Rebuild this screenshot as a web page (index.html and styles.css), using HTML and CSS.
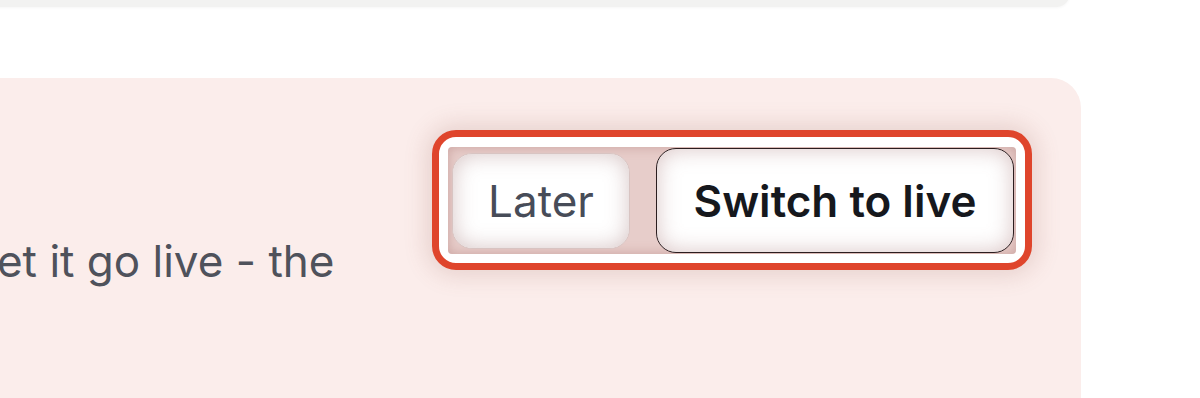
FILE: index.html
```html
<!DOCTYPE html>
<html lang="en">
<head>
    <meta charset="UTF-8">
    <meta name="viewport" content="width=device-width, initial-scale=1.0">
    <title>Publish settings</title>
    <link rel="stylesheet" href="styles.css">
</head>
<body>
    <div class="page">
        <div class="card card-top"></div>

        <section class="card banner">
            <div class="banner-text">
                <p>When you're happy, let it go live - the</p>
            </div>

            <div class="highlight">
                <div class="toggle">
                    <button class="btn btn-later">Later</button>
                    <button class="btn btn-live">Switch to live</button>
                </div>
            </div>
        </section>
    </div>
</body>
</html>
```

FILE: styles.css
```css
/* Estilos - banner de publicación */
:root {
    --banner-bg: #fbedeb;
    --top-bg: #f2f2f1;
    --frame-red: #df452c;
    --toggle-bg: #e7cdca;
    --text-muted: #4f525b;
    --text-dark: #16181d;
}

* {
    margin: 0;
    padding: 0;
    box-sizing: border-box;
    font-family: Inter, 'Noto Sans', sans-serif;
}

body {
    background-color: #ffffff;
    overflow: hidden;
}

.page {
    margin: 0 119px 0 -520px;
}

.card-top {
    height: 40px;
    margin-top: -33px;
    margin-right: 11px;
    margin-bottom: 71px;
    background-color: var(--top-bg);
    border-radius: 0 0 14px 0;
    box-shadow: 0 1px 3px rgba(0, 0, 0, 0.04);
}

.banner {
    display: flex;
    justify-content: space-between;
    align-items: flex-start;
    min-height: 400px;
    padding: 52px 49px 0 78px;
    background-color: var(--banner-bg);
    border-radius: 0 30px 0 0;
}

.banner-text p {
    margin-top: 101px;
    font-size: 44px;
    line-height: 60px;
    color: var(--text-muted);
}

.highlight {
    width: 600px;
    padding: 10px 9px 9px 9px;
    background-color: #ffffff;
    border: 7px solid var(--frame-red);
    border-radius: 24px;
    box-shadow: 0 0 22px 6px rgba(150, 90, 80, 0.18);
}

.toggle {
    display: flex;
    align-items: center;
    gap: 26px;
    height: 107px;
    padding: 0 2px 0 4px;
    background-color: var(--toggle-bg);
    border-radius: 4px;
    box-shadow: inset 0 0 12px rgba(160, 100, 95, 0.4);
}

.btn {
    font-size: 44px;
    border-radius: 20px;
    background-color: #ffffff;
    cursor: pointer;
}

.btn-later {
    width: 178px;
    height: 96px;
    color: #474c58;
    font-weight: 400;
    border: 1px solid #d8c4c2;
    box-shadow: inset 0 0 22px rgba(165, 125, 125, 0.45);
}

.btn-live {
    width: 358px;
    height: 105px;
    color: var(--text-dark);
    font-weight: 600;
    border: 1.5px solid #2b1d1f;
    box-shadow: inset 0 0 22px rgba(165, 115, 115, 0.42);
}
```
